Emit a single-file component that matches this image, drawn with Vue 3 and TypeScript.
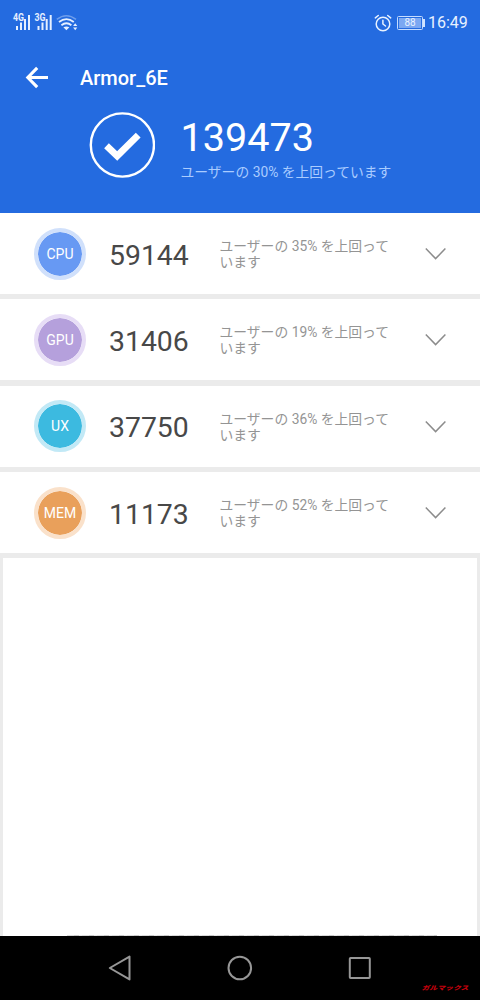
<script setup lang="ts">
interface Score {
  name: string
  value: number
  percent: number
}

const scores: Score[] = [
  { name: 'CPU', value: 59144, percent: 35 },
  { name: 'GPU', value: 31406, percent: 19 },
  { name: 'UX', value: 37750, percent: 36 },
  { name: 'MEM', value: 11173, percent: 52 },
]
</script>

<template>
  <div class="screen">
    <header class="header">
      <div class="status">
        <svg class="signals" width="80" height="24" viewBox="0 0 80 24">
          <g fill="#e6f0ff">
            <text class="net" x="13" y="10.5" textLength="11" lengthAdjust="spacingAndGlyphs">4G</text>
            <text class="net" x="34.6" y="10.5" textLength="11" lengthAdjust="spacingAndGlyphs">3G</text>
            <path d="M16 16h2v4h-2zM20 12.5h2V20h-2zM24 9h2v11h-2zM28 5h2v15h-2z" />
            <path d="M37.5 16h2v4h-2zM41.5 12.5h2V20h-2zM45.7 9h2v11h-2zM49.7 5h2v15h-2z" />
            <path d="M63.4 17.3q3-1.8 6 0l-3 3z" />
            <path d="M75.2 13.3l2.1 2.8h-4.2zM75.2 20.2l2.1-2.8h-4.2z" />
          </g>
          <g fill="none" stroke="#e6f0ff" stroke-width="1.8">
            <path d="M61.4 15.2q5-4 10 0" />
            <path d="M59 12q7.4-5.6 14.8 0" />
            <path d="M56.8 9.4q9.6-7.2 19.2 0" stroke-opacity=".38" stroke-width="1.6" />
          </g>
        </svg>
        <div class="status-right">
          <svg width="18" height="18" viewBox="0 0 18 18" fill="none" stroke="#e8f2ff" stroke-width="1.5" stroke-linecap="round">
            <circle cx="9" cy="10" r="6.8" />
            <path d="M8.9 6.2V10l2.6 2M1.3 3.9l3-2.4M16.7 3.9l-3-2.4" />
          </svg>
          <span class="battery"><span class="charge">88</span></span>
          <span class="clock">16:49</span>
        </div>
      </div>
      <div class="titlebar">
        <svg width="24" height="24" viewBox="0 0 24 24" fill="none" stroke="#fff" stroke-width="3.1">
          <path d="M12.2 1.8L2.8 11.5l9.4 9.7M3 11.5h20" />
        </svg>
        <h1>Armor_6E</h1>
      </div>
      <div class="summary">
        <svg width="66" height="66" viewBox="0 0 66 66">
          <circle cx="33.4" cy="33" r="31.6" fill="none" stroke="#fff" stroke-width="2.4" />
          <path d="M17.5 33.8L28.2 44L49.2 23.2" fill="none" stroke="#fff" stroke-width="6.8" />
        </svg>
        <div class="total">
          <strong>139473</strong>
          <p>ユーザーの 30% を上回っています</p>
        </div>
      </div>
    </header>

    <main>
      <section v-for="score in scores" :key="score.name" class="row">
        <span class="badge" :class="score.name.toLowerCase()">{{ score.name }}</span>
        <span class="value">{{ score.value }}</span>
        <p class="note">ユーザーの {{ score.percent }}% を上回って<br />います</p>
        <svg class="chevron" width="22" height="13" viewBox="0 0 22 13" fill="none" stroke="#8c8c8c" stroke-width="1.5">
          <path d="M.8 1.6L10.6 11.6L20.4 1.6" />
        </svg>
      </section>
      <div class="panel">
        <div class="panel-edge"></div>
      </div>
    </main>

    <nav class="nav">
      <svg width="24" height="26" viewBox="0 0 24 26"><path d="M1.8 13L21.5 1.6V24.4z" /></svg>
      <svg width="26" height="26" viewBox="0 0 26 26"><circle cx="12.8" cy="13" r="11.3" /></svg>
      <svg width="24" height="24" viewBox="0 0 24 24"><rect x="1.8" y="2" width="20" height="20" rx=".8" /></svg>
      <svg class="mark" width="50" height="8" viewBox="0 0 50 8">
        <text x="1" y="6.2" textLength="47" lengthAdjust="spacingAndGlyphs" transform="skewX(-18) translate(1.5 0)">ガルマックス</text>
      </svg>
    </nav>
  </div>
</template>

<style>
body {
  margin: 0;
}
</style>

<style scoped>
.screen {
  width: 480px;
  height: 1000px;
  display: flex;
  flex-direction: column;
  overflow: hidden;
  background: #ebebeb;
  font-family: Roboto, "Noto Sans CJK JP", sans-serif;
}
.screen svg {
  display: block;
  flex: none;
}
p, h1 {
  margin: 0;
}
.header {
  height: 213px;
  flex: none;
  background: #246be0;
  color: #fff;
}
.status {
  height: 46px;
  display: flex;
  justify-content: space-between;
}
.signals {
  margin-top: 10px;
}
.net {
  font: 700 10px Roboto, sans-serif;
}
.status-right {
  height: 46px;
  display: flex;
  align-items: center;
  padding-right: 12px;
  color: #e8f2ff;
}
.battery {
  position: relative;
  box-sizing: border-box;
  width: 26px;
  height: 14px;
  margin-left: 5px;
  padding: 1px;
  border: 1px solid #c5dcff;
  border-radius: 1.5px;
}
.battery::after {
  content: "";
  position: absolute;
  left: 25px;
  top: 2px;
  width: 2px;
  height: 8px;
  background: #d2e4ff;
}
.charge {
  display: block;
  height: 10px;
  background: #7ba8f2;
  font-size: 10px;
  line-height: 10.5px;
  text-align: center;
}
.clock {
  margin-left: 5px;
  font-size: 16px;
  line-height: 20px;
  width: 40px;
  white-space: nowrap;
}
.titlebar {
  height: 64px;
  display: flex;
  align-items: center;
  padding-left: 25px;
}
.titlebar h1 {
  margin-left: 31px;
  font-size: 20px;
  line-height: 24px;
  font-weight: 500;
}
.summary {
  display: flex;
  margin-top: 2px;
  padding-left: 89px;
}
.total {
  margin-left: 25.5px;
}
.total strong {
  display: block;
  height: 50px;
  font-size: 39.6px;
  line-height: 52px;
  font-weight: 400;
}
.total p {
  font-size: 13.8px;
  line-height: 20px;
  color: #aaccff;
  white-space: nowrap;
}
main {
  flex: 1;
  display: flex;
  flex-direction: column;
  gap: 5.4px;
}
.row {
  height: 81px;
  flex: none;
  display: flex;
  align-items: center;
  background: #fff;
}
.badge {
  box-sizing: border-box;
  width: 52px;
  height: 52px;
  flex: none;
  margin-left: 34px;
  border: 4px solid;
  border-radius: 50%;
  background-clip: padding-box;
  color: #fff;
  font-size: 14px;
  line-height: 45px;
  text-align: center;
}
.cpu {
  background-color: #6799f3;
  border-color: #d0e0fb;
}
.gpu {
  background-color: #b5a0dc;
  border-color: #e7ddf6;
}
.ux {
  background-color: #3cbae0;
  border-color: #c2e9f6;
}
.mem {
  background-color: #e9a05b;
  border-color: #fae1ca;
}
.value {
  width: 111px;
  margin-left: 23px;
  padding-top: 4px;
  font-size: 28.4px;
  line-height: 34px;
  color: #484848;
}
.note {
  width: 185px;
  margin-left: -.5px;
  padding-top: 1px;
  font-size: 13.8px;
  line-height: 16px;
  color: #949494;
  white-space: nowrap;
}
.chevron {
  margin-left: 20px;
}
.panel {
  flex: 1;
  display: flex;
  align-items: flex-end;
  margin: -.6px 3px 0;
  background: #fff;
}
.panel-edge {
  flex: 1;
  height: 1px;
  margin: 0 40px 0 64px;
  background: repeating-linear-gradient(90deg, #d8d8d8 0 7px, #c6c6c6 7px 12px, #e4e4e4 12px 15px);
}
.nav {
  height: 64px;
  flex: none;
  display: grid;
  grid-template-columns: 60px 120px 120px 120px 60px;
  align-items: center;
  justify-items: center;
  background: #000;
}
.nav svg {
  fill: none;
  stroke: #979797;
  stroke-width: 2;
  stroke-linejoin: round;
}
.nav svg:first-child {
  grid-column: 2;
}
.nav .mark {
  align-self: end;
  justify-self: end;
  margin: 0 9px 8px 0;
  fill: #c4000c;
  stroke: none;
}
.mark text {
  font: 900 6px "Noto Sans CJK JP", sans-serif;
}
</style>
